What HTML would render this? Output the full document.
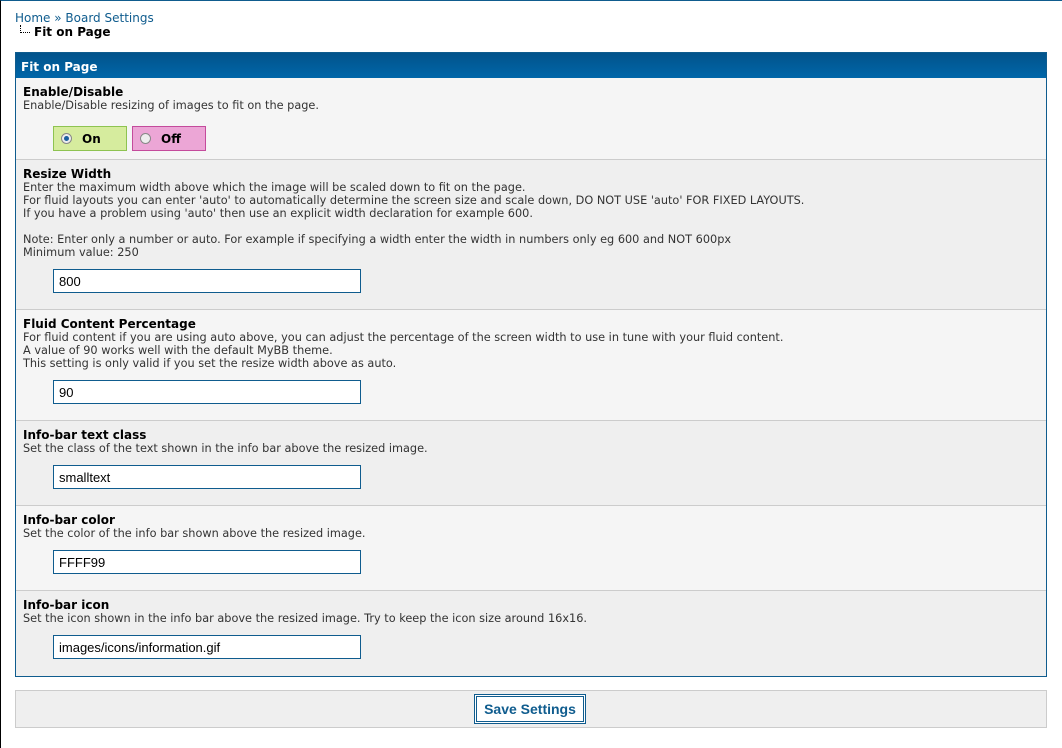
<!DOCTYPE html>
<html><head><meta charset="utf-8"><style>
*{box-sizing:border-box;margin:0;padding:0}
body{width:1062px;height:748px;background:#fff;font-family:"DejaVu Sans",Verdana,sans-serif;font-size:11.3px;color:#333;position:relative;overflow:hidden;border-top:1px solid #0f5c8e;border-left:1px solid #000}
.bc{position:absolute;left:14px;top:10px;font-size:12px;color:#0f5c8e}
.bc2{position:absolute;left:19px;top:24px;font-size:12px;font-weight:bold;color:#000}
.bc2 span{display:inline-block;width:10px;height:8px;border-left:1px dotted #000;border-bottom:1px dotted #000;margin-right:4px;vertical-align:3px}
.box{position:absolute;left:14px;top:51px;width:1032px;height:625px;border:1px solid #0f5c8e;background:#efefef}
.hd{height:25px;background:linear-gradient(#02538b,#0066a9);color:#fff;font-weight:bold;font-size:12px;padding:7px 0 0 5px}
.row{position:absolute;left:0;width:1030px;border-top:1px solid #ccc;padding:7px 7px}
.a{background:#f5f5f5}.b{background:#efefef}
.t{font-weight:bold;font-size:12px;color:#000;line-height:14px}
.d{line-height:13px}
.in{position:absolute;left:37px;width:308px;height:24px;border:1px solid #0f5c8e;background:#fff;font-family:"Liberation Sans",Arial,sans-serif;font-size:13px;color:#000;padding:4px 5px}
.rb{position:absolute;top:48px;width:74px;height:25px;font-weight:bold;font-size:12px;color:#000;padding:5px 0 0 7px}
.rb i{display:inline-block;width:11px;height:11px;border-radius:50%;border:1px solid #888;background:#eee;vertical-align:-1px;margin-right:10px;position:relative}
.rb i.on:after{content:"";position:absolute;left:2px;top:2px;width:5px;height:5px;border-radius:50%;background:#1a5f9e}
.save{position:absolute;left:14px;top:689px;width:1032px;height:38px;border:1px solid #ccc;background:#efefef}
.btn{position:absolute;left:458px;top:3px;width:112px;height:30px;border:3px double #0f5c8e;background:#fff;color:#0f5c8e;font-family:"Liberation Sans",Arial,sans-serif;font-weight:bold;font-size:14px;text-align:center;padding-top:4px}
</style></head><body>
<div class="bc">Home » Board Settings</div>
<div class="bc2"><span></span>Fit on Page</div>
<div class="box">
<div class="hd">Fit on Page</div>
<div class="row a" style="top:25px;height:81px;border-top:none">
<div class="t">Enable/Disable</div><div class="d">Enable/Disable resizing of images to fit on the page.</div>
<div class="rb" style="left:37px;background:#d6ec9e;border:1px solid #8ec351"><i class="on"></i>On</div>
<div class="rb" style="left:116px;background:#eca6d6;border:1px solid #c44b9c"><i></i>Off</div>
</div>
<div class="row b" style="top:106px;height:150px">
<div class="t">Resize Width</div><div class="d">Enter the maximum width above which the image will be scaled down to fit on the page.<br>For fluid layouts you can enter 'auto' to automatically determine the screen size and scale down, DO NOT USE 'auto' FOR FIXED LAYOUTS.<br>If you have a problem using 'auto' then use an explicit width declaration for example 600.<br><br>Note: Enter only a number or auto. For example if specifying a width enter the width in numbers only eg 600 and NOT 600px<br>Minimum value: 250</div>
<div class="in" style="top:109px">800</div>
</div>
<div class="row a" style="top:256px;height:111px">
<div class="t">Fluid Content Percentage</div><div class="d">For fluid content if you are using auto above, you can adjust the percentage of the screen width to use in tune with your fluid content.<br>A value of 90 works well with the default MyBB theme.<br>This setting is only valid if you set the resize width above as auto.</div>
<div class="in" style="top:70px">90</div>
</div>
<div class="row b" style="top:367px;height:85px">
<div class="t">Info-bar text class</div><div class="d">Set the class of the text shown in the info bar above the resized image.</div>
<div class="in" style="top:44px">smalltext</div>
</div>
<div class="row a" style="top:452px;height:85px">
<div class="t">Info-bar color</div><div class="d">Set the color of the info bar shown above the resized image.</div>
<div class="in" style="top:44px">FFFF99</div>
</div>
<div class="row b" style="top:537px;height:86px">
<div class="t">Info-bar icon</div><div class="d">Set the icon shown in the info bar above the resized image. Try to keep the icon size around 16x16.</div>
<div class="in" style="top:44px">images/icons/information.gif</div>
</div>
</div>
<div class="save"><div class="btn">Save Settings</div></div>
</body></html>
